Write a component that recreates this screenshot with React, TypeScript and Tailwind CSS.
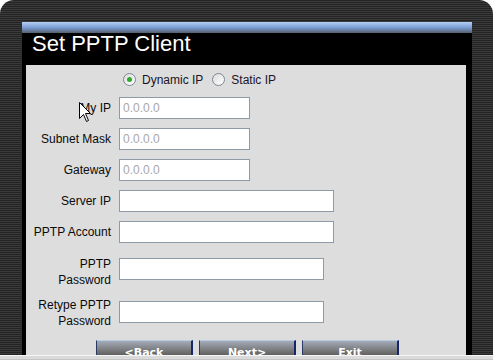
import React from "react";

function Radio({ checked }: { checked?: boolean }) {
  return (
    <div className="w-[13px] h-[13px] rounded-full border border-[#7c8894] bg-gradient-to-br from-[#dcdcdc] to-[#ffffff] flex items-center justify-center">
      {checked && <div className="w-[5px] h-[5px] rounded-full bg-[#2faa2f]" />}
    </div>
  );
}

function Field({ w, value }: { w: string; value?: string }) {
  return (
    <div
      className={`${w} h-[22px] border border-[#8e9aa6] bg-white text-[12px] leading-[20px] pl-[3px] text-[#a8a8a8]`}
    >
      {value}
    </div>
  );
}

function Btn({ label }: { label: string }) {
  return (
    <div className="w-[97px] h-[24px] border-l border-l-[#2a3a66] border-r-2 border-r-[#16246a] border-t border-t-[#b8cce8] bg-gradient-to-b from-[#a4acb8] via-[#6e6e6e] to-[#2e2e2e] text-center text-white font-bold text-[11px] leading-[22px] font-['DejaVu_Sans',Verdana,sans-serif] pt-[1px]">
      {label}
    </div>
  );
}

export default function App() {
  return (
    <div className="w-[493px] h-[360px] bg-white relative overflow-hidden font-['Liberation_Sans',Arial,sans-serif]">
      <div className="h-[355px] rounded-t-[14px] bg-[repeating-linear-gradient(180deg,#242424_0px,#242424_1px,#3a3a3a_1px,#3a3a3a_2px)] pt-[22px] pl-[22px] pr-[21px] flex flex-col overflow-hidden">
        <div className="h-[11px] shrink-0 bg-gradient-to-b from-[#b4d0f6] via-[#7c9ed6] to-[#55606e]" />
        <div className="h-[32px] shrink-0 bg-black pl-[10px] text-[22px] leading-[22px] text-white">
          Set PPTP Client
        </div>
        <div className="flex-1 min-h-0 bg-black pl-[4px] pr-[6px] flex">
          <div className="flex-1 bg-[#dddddd] flex flex-col pt-[8px] text-[12px] text-[#0a0a0a]">
            <div className="flex items-center h-[13px] pl-[97px] text-[#1a1426]">
              <Radio checked />
              <span className="ml-[6px]">Dynamic IP</span>
              <span className="ml-[9px]"><Radio /></span>
              <span className="ml-[6px]">Static IP</span>
            </div>
            <div className="flex flex-col mt-[11px]">
              <div className="flex items-center gap-[8px]">
                <div className="w-[85px] text-right">My IP</div>
                <Field w="w-[131px]" value="0.0.0.0" />
              </div>
              <div className="flex items-center gap-[8px] mt-[9px]">
                <div className="w-[85px] text-right">Subnet Mask</div>
                <Field w="w-[131px]" value="0.0.0.0" />
              </div>
              <div className="flex items-center gap-[8px] mt-[9px]">
                <div className="w-[85px] text-right">Gateway</div>
                <Field w="w-[131px]" value="0.0.0.0" />
              </div>
              <div className="flex items-center gap-[8px] mt-[9px]">
                <div className="w-[85px] text-right">Server IP</div>
                <Field w="w-[215px]" />
              </div>
              <div className="flex items-center gap-[8px] mt-[9px]">
                <div className="w-[85px] text-right">PPTP Account</div>
                <Field w="w-[215px]" />
              </div>
              <div className="flex items-start gap-[8px] mt-[13px]">
                <div className="w-[85px] text-right leading-[16px]">
                  PPTP
                  <br />
                  Password
                </div>
                <div className="mt-[2px]">
                  <Field w="w-[205px]" />
                </div>
              </div>
              <div className="flex items-start gap-[8px] mt-[9px]">
                <div className="w-[85px] text-right leading-[16px]">
                  Retype PPTP
                  <br />
                  Password
                </div>
                <div className="mt-[4px]">
                  <Field w="w-[205px]" />
                </div>
              </div>
            </div>
            <div className="flex gap-[6px] pl-[70px] mt-[11px]">
              <Btn label="<Back" />
              <Btn label="Next>" />
              <Btn label="Exit" />
            </div>
          </div>
        </div>
      </div>
      <div className="h-[5px] border-t border-t-[#f6f6f6] bg-[#dadada] border-b border-b-[#c4c4c4]" />
      <svg
        className="absolute left-[79px] top-[102px]"
        width="13"
        height="21"
        viewBox="0 0 13 21"
      >
        <path
          d="M0.5 0.5 L0.5 16.5 L4.5 12.5 L7.5 19.5 L9.5 18.5 L6.5 11.5 L11.5 11.5 Z"
          fill="white"
          stroke="black"
          strokeWidth="1"
        />
      </svg>
    </div>
  );
}
